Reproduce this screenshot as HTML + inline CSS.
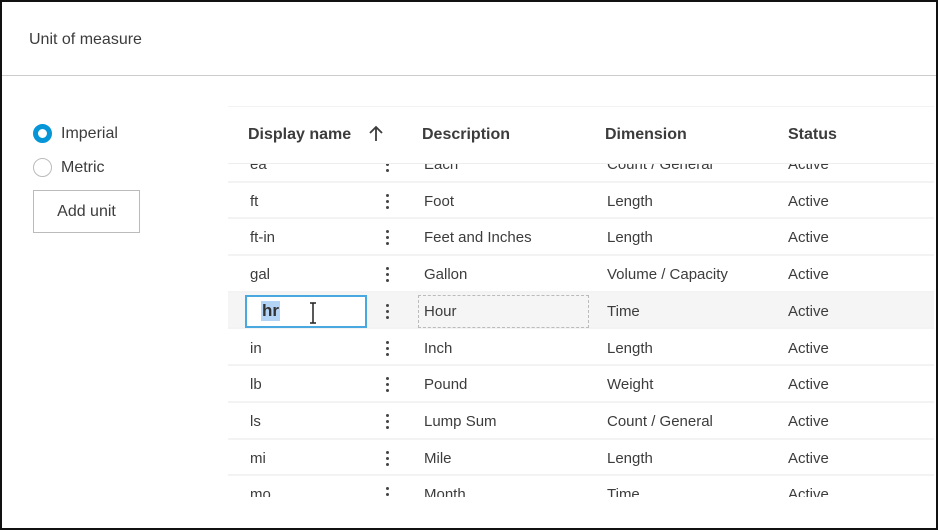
<!DOCTYPE html>
<html><head><style>
*{margin:0;padding:0;box-sizing:border-box}
body{width:938px;height:530px;background:#fff;font-family:"Liberation Sans",sans-serif;color:#3c3c3c;overflow:hidden;position:relative}
.frame{position:absolute;left:0;top:0;width:938px;height:530px;border:2px solid #111}
.title{position:absolute;left:29px;top:31px;font-size:16px;color:#3c3c3c}
.hr{position:absolute;left:2px;right:2px;top:75px;height:1px;background:#ccc}
.radio{position:absolute;left:33px;width:19px;height:19px;border-radius:50%}
.lbl{position:absolute;left:61px;font-size:16px}
.btn{position:absolute;left:33px;top:190px;width:107px;height:43px;border:1px solid #bbb;font-size:16px;display:flex;align-items:center;justify-content:center;padding-top:1px}
.tbl{position:absolute;left:228px;top:106px;width:706px;height:1px;background:#f3f3f3}
.th{position:absolute;top:126px;font-size:16px;font-weight:bold;color:#3c3c3c}
.clip{position:absolute;left:228px;top:163px;width:706px;height:334px;overflow:hidden;border-top:1px solid #eee}
.row{position:absolute;left:0;width:706px;height:36.7px;border-bottom:2px solid #f3f3f3;font-size:15px}
.row span{position:absolute;top:10px}
.dots{position:absolute;left:158px;top:11px;width:3px;height:17px}
.dots i{display:block;width:3px;height:3px;background:#444;border-radius:50%;margin-bottom:3px}
</style></head><body>
<div class="frame"></div>
<div class="title">Unit of measure</div>
<div class="hr"></div>
<div class="radio" style="top:124px;border:5px solid #0696d7"></div>
<div class="lbl" style="top:125px">Imperial</div>
<div class="radio" style="top:158px;border:1px solid #bbb"></div>
<div class="lbl" style="top:159px">Metric</div>
<div class="btn">Add unit</div>
<div class="tbl"></div>
<div class="th" style="left:248px">Display name</div>
<svg style="position:absolute;left:367px;top:125px" width="18" height="18" viewBox="0 0 18 18"><path d="M9 16V2M3 8l6-6 6 6" stroke="#3c3c3c" stroke-width="1.8" fill="none"/></svg>
<div class="th" style="left:422px">Description</div>
<div class="th" style="left:605px">Dimension</div>
<div class="th" style="left:788px">Status</div>
<div class="clip">
<div class="row" style="top:-18px"><span style="left:22px">ea</span><div class="dots"><i></i><i></i><i></i></div><span style="left:196px">Each</span><span style="left:379px">Count / General</span><span style="left:560px">Active</span></div>
<div class="row" style="top:18.7px"><span style="left:22px">ft</span><div class="dots"><i></i><i></i><i></i></div><span style="left:196px">Foot</span><span style="left:379px">Length</span><span style="left:560px">Active</span></div>
<div class="row" style="top:55.4px"><span style="left:22px">ft-in</span><div class="dots"><i></i><i></i><i></i></div><span style="left:196px">Feet and Inches</span><span style="left:379px">Length</span><span style="left:560px">Active</span></div>
<div class="row" style="top:92.1px"><span style="left:22px">gal</span><div class="dots"><i></i><i></i><i></i></div><span style="left:196px">Gallon</span><span style="left:379px">Volume / Capacity</span><span style="left:560px">Active</span></div>
<div class="row" style="top:128.8px;background:#f5f5f5">
<div style="position:absolute;left:17px;top:2px;width:122px;height:33px;border:2px solid #4aa8e0;background:#fff"></div>
<span style="left:33px;background:#b3d4f5;top:8px;font-size:17px;font-weight:bold;color:#333;padding:0 1px">hr</span>
<svg style="position:absolute;left:80px;top:9px" width="10" height="22"><path d="M2 1h6M5 1v20M2 21h6" stroke="#222" stroke-width="1.5" fill="none"/></svg>
<div class="dots"><i></i><i></i><i></i></div>
<div style="position:absolute;left:190px;top:2px;width:171px;height:33px;border:1px dashed #bbb"></div>
<span style="left:196px">Hour</span><span style="left:379px">Time</span><span style="left:560px">Active</span></div>
<div class="row" style="top:165.5px"><span style="left:22px">in</span><div class="dots"><i></i><i></i><i></i></div><span style="left:196px">Inch</span><span style="left:379px">Length</span><span style="left:560px">Active</span></div>
<div class="row" style="top:202.2px"><span style="left:22px">lb</span><div class="dots"><i></i><i></i><i></i></div><span style="left:196px">Pound</span><span style="left:379px">Weight</span><span style="left:560px">Active</span></div>
<div class="row" style="top:238.9px"><span style="left:22px">ls</span><div class="dots"><i></i><i></i><i></i></div><span style="left:196px">Lump Sum</span><span style="left:379px">Count / General</span><span style="left:560px">Active</span></div>
<div class="row" style="top:275.6px"><span style="left:22px">mi</span><div class="dots"><i></i><i></i><i></i></div><span style="left:196px">Mile</span><span style="left:379px">Length</span><span style="left:560px">Active</span></div>
<div class="row" style="top:312.3px"><span style="left:22px">mo</span><div class="dots"><i></i><i></i><i></i></div><span style="left:196px">Month</span><span style="left:379px">Time</span><span style="left:560px">Active</span></div>
</div>
</body></html>
